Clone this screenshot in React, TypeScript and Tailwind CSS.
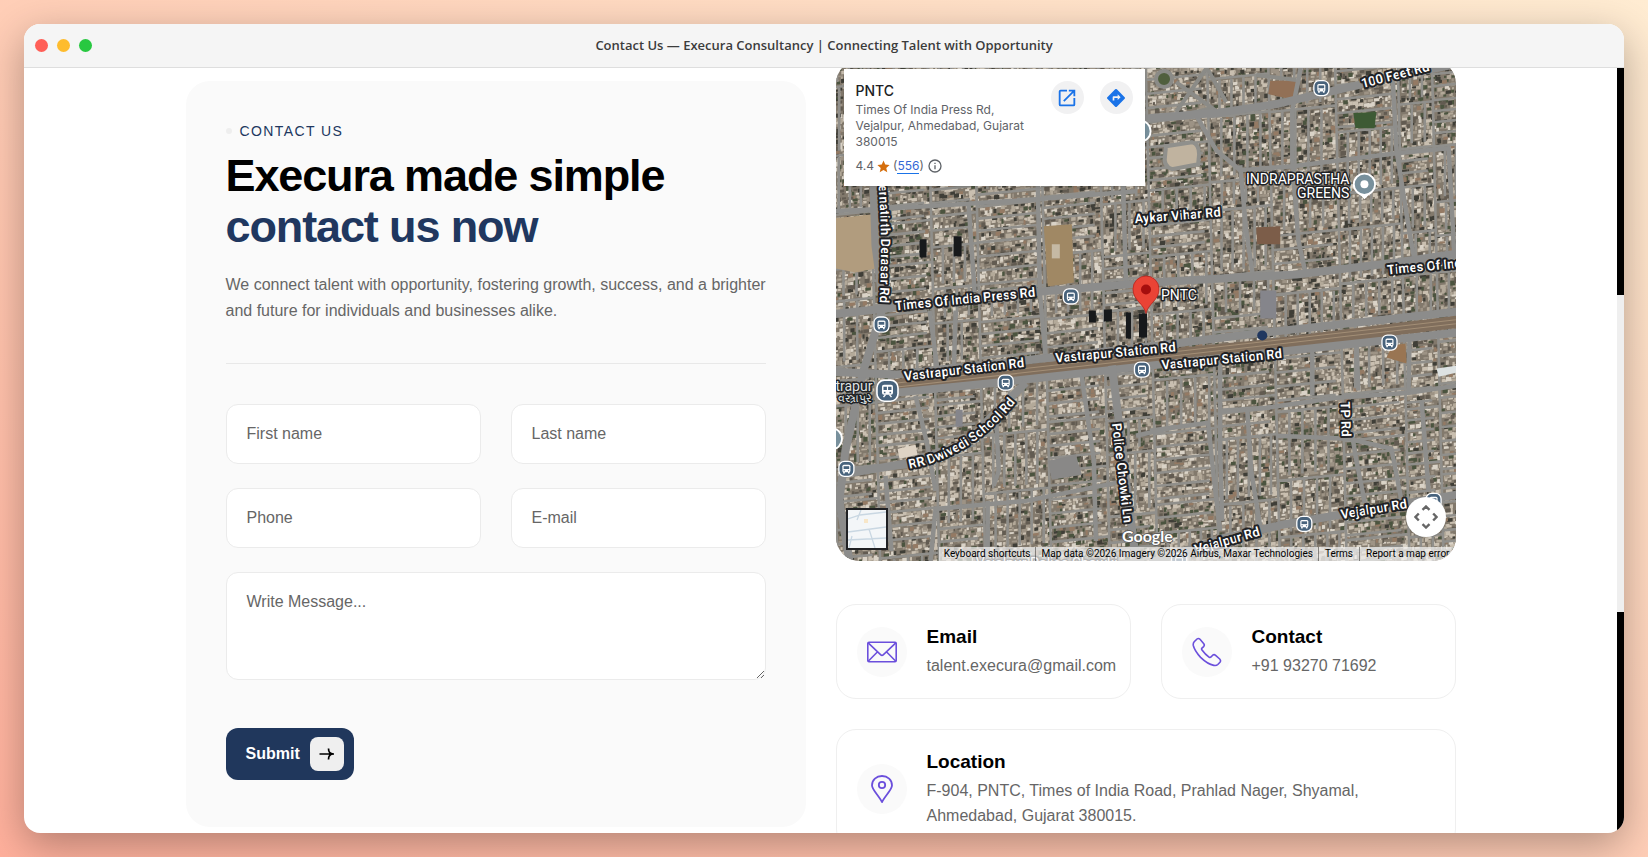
import React from "react";

type Point = [number, number];

const buildingColors = ["#c9bfb0", "#b3a999", "#dad3c7", "#9d9385", "#3f3e37", "#4b543f", "#947a64", "#625b51"];

function createRandom(seed: number) {
  let value = seed;
  return () => {
    value = (value * 1664525 + 1013904223) % 4294967296;
    return value / 4294967296;
  };
}

function createBlocks() {
  const random = createRandom(42);
  const blocks = buildingColors.map(() => "");
  let lanes = "";
  const point = (x: number, y: number) => `${x.toFixed(1)} ${(y - (x - 310) * 0.1).toFixed(1)}`;

  for (let left = -10; left < 630; ) {
    const width = 34 + random() * 34;
    lanes += `M${point(left, -40)}L${point(left + 14, 560)}`;
    for (let top = -60 + random() * 30; top < 550; ) {
      const height = 28 + random() * 44;
      const shade = random();
      const green = shade < 0.25 ? 0.2 : 0.05;
      const dark = top > 260 ? 0.07 : 0.14;
      const pitch = 11 + Math.floor(random() * 4);
      const vertical = random() < 0.45;
      const shift = ((top + 40) / 600) * 14;
      lanes += `M${point(left + shift, top)}L${point(left + shift + width, top)}`;
      if (vertical) {
        for (let x = pitch; x < width - 4; x += pitch) {
          lanes += `M${point(left + shift + x, top)}L${point(left + shift + x, top + height - 5)}`;
        }
      } else {
        for (let y = pitch; y < height - 4; y += pitch) {
          lanes += `M${point(left + shift, top + y)}L${point(left + shift + width - 6, top + y)}`;
        }
      }
      for (let y = top + 1; y < top + height - 1; y += 3.6) {
        for (let x = left + 2 + random() * 3; x < left + width; x += 2.6 + random() * 4) {
          const pick = random();
          let color = 0;
          if (pick < green) color = 5;
          else if (pick < green + dark) color = 4;
          else if (pick < green + dark + 0.1) color = 7;
          else if (pick < green + dark + 0.15) color = 6;
          else if (pick < green + dark + 0.27) color = 3;
          else if (pick < green + dark + 0.42) color = 1;
          else if (pick < green + dark + 0.54) color = 2;
          const w = 1.6 + random() * 4;
          const h = 1.6 + random() * 3.2;
          const slant = w * 0.1;
          blocks[color] += `M${point(x + shift, y + random() * 2.4)}l${w.toFixed(1)} -${slant.toFixed(1)}v${h.toFixed(1)}l-${w.toFixed(1)} ${slant.toFixed(1)}z`;
        }
      }
      top += height;
    }
    left += width;
  }
  return { blocks, lanes };
}

const { blocks, lanes } = createBlocks();

const streets = [
  "M-5 151L40 149L140 143L200 139L300 131",
  "M202 120L204 230L210 300",
  "M133 145L139 232",
  "M287 120L290 222",
  "M466 0L456 50L456 100L462 180L470 216",
  "M556 15L560 90L571 160L578 200",
  "M404 105L410 170L417 218",
  "M360 55L380 90L404 110L456 106L560 93L612 88L618 200",
  "M384 300L384 390L386 460",
  "M384 350L430 347L500 337L572 332L620 325",
  "M411 348L415 410L424 466",
  "M573 277L572 332",
  "M585 340L592 430",
  "M515 370L520 400L530 450",
  "M440 375L512 378L555 388L565 440",
  "M314 370L372 362L378 420L384 470",
  "M476 282L476 335",
  "M520 280L522 330",
  "M80 335L92 385L100 430",
  "M120 250L118 318",
  "M94 250L103 318",
  "M50 415L56 490",
  "M95 500L100 448L190 440L290 420",
  "M152 500L152 440",
  "M160 350L163 410L158 425",
  "M245 310L258 400L260 480",
  "M300 375L340 366",
];

const avenues = [
  "M240 67L314 58L380 53L440 44L500 30L560 16L630 2",
  "M38 120L40 185L48 245L28 310L10 390L4 440L14 500",
  "M-5 254L50 248L205 231L314 222L460 214L560 202L630 192",
  "M-5 311L60 314L314 286L420 273L630 250",
  "M40 334L170 321L314 305L630 271",
  "M10 413L75 402L130 382L160 352L190 322",
  "M276 305L284 370L300 500",
  "M314 502L384 478L450 463L630 432",
];

interface MapLabel {
  id: string;
  text: string;
  path: string;
}

const roadLabels: MapLabel[] = [
  { id: "hundred-feet", text: "100 Feet Rd", path: "M526 28L600 9" },
  { id: "derasar", text: "ernatirth Derasar Rd", path: "M43 125Q48 185 43 262" },
  { id: "press", text: "Times Of India Press Rd", path: "M60 250L220 234" },
  { id: "press-east", text: "Times Of India Press Rd", path: "M551 214L720 198" },
  { id: "aykar", text: "Aykar Vihar Rd", path: "M299 163L400 155" },
  { id: "station-west", text: "Vastrapur Station Rd", path: "M69 320L210 304" },
  { id: "station-mid", text: "Vastrapur Station Rd", path: "M220 302L360 289" },
  { id: "station-east", text: "Vastrapur Station Rd", path: "M326 309L470 295" },
  { id: "dwivedi", text: "RR Dwivedi School Rd", path: "M74 408Q145 394 192 325" },
  { id: "police", text: "Police Chowki Ln", path: "M276 363L290 480" },
  { id: "tp", text: "TP Rd", path: "M504 341L506 390" },
  { id: "vejalpur", text: "Vejalpur Rd", path: "M505 458L590 444" },
  { id: "vejalpur-west", text: "Vejalpur Rd", path: "M360 493L440 470" },
];

const busStops: Point[] = [
  [235, 236],
  [485, 28],
  [46, 264],
  [170, 322],
  [11, 408],
  [306, 309],
  [553, 282],
  [468, 463],
  [597, 440],
  [343, 500],
];

function BusStop({ at }: { at: Point }) {
  return (
    <g transform={`translate(${at[0]} ${at[1]})`}>
      <rect x="-7.500" y="-7.500" width="15" height="15" rx="5.500" fill="#48637c" stroke="#fff" strokeWidth="1.3" />
      <rect x="-4" y="-4" width="8" height="7.4" rx="1.5" fill="#fff" />
      <rect x="-2.8" y="-2.6" width="5.6" height="2.8" fill="#48637c" />
      <path d="M-3.2 3h1.6v1.6h-1.6zM1.6 3h1.6v1.6H1.6z" fill="#fff" />
      <path d="M-2.8 1.4h1.2v1h-1.2zM1.6 1.4h1.2v1H1.6z" fill="#48637c" />
    </g>
  );
}

function PlacePin({ at }: { at: Point }) {
  return (
    <g transform={`translate(${at[0]} ${at[1]})`}>
      <path d="M-6 9L0 15L6 9Z" fill="#fff" />
      <circle r="10.6" fill="#78909c" stroke="#fff" strokeWidth="1.8" />
      <circle r="4" fill="#fff" />
    </g>
  );
}

function SatelliteMap() {
  return (
    <svg
      viewBox="0 0 620 500"
      preserveAspectRatio="xMidYMid slice"
      className="block size-full"
      role="img"
      aria-label="Satellite map around PNTC"
      fontFamily="Roboto, sans-serif"
    >
      <rect width="620" height="500" fill="#82796c" />
      {blocks.map((path, index) => (
        <path key={buildingColors[index]} d={path} fill={buildingColors[index]} />
      ))}
      <path d={lanes} stroke="#908f8b" strokeWidth="2.6" fill="none" />
      <path d="M0 158L37 154L40 208L20 212L0 208Z" fill="#b19c7e" />
      <path d="M208 166L236 164L238 222L212 226Z" fill="#a08864" />
      <path d="M216 184h8v14h-8z" fill="#c5b9a4" />
      <path d="M420 167L444 166L444 184L421 184Z" fill="#7c5d49" />
      <path d="M434 21L460 20L458 40L432 34Z" fill="#927056" />
      <path d="M556 285L569 283L570 303L550 297Z" fill="#997553" />
      <path d="M517 53L540 52L538 68L519 68Z" fill="#3d5a34" />
      <path d="M290 252h5v26h-5zM303 253h8v24h-8zM253 250h7v12h-7zM268 249h8v12h-8zM84 179h7v18h-7zM118 176h8v20h-8z" fill="#17191b" />
      <path d="M120 349h7v17h-7zM424 230h16v28h-16z" fill="#85858b" />
      <path d="M62 388L80 384L82 394L64 398Z" fill="#ded3c4" />
      <path d="M600 308L620 305V312L602 316Z" fill="#dde2e2" />
      <path d="M212 400L240 394L246 414L216 419Z" fill="#898887" />
      <path d="M330 86L356 82Q363 84 363 94L362 104L336 109Q327 106 329 96Z" fill="#c0b39f" stroke="#90908c" strokeWidth="4" />
      <circle cx="328" cy="19" r="8" fill="#505f3d" stroke="#8b8b87" strokeWidth="4" />
      <path d="M340 22L376 48L314 62M376 0L340 52M372 10L390 42M420 15L460 20" stroke="#8b8b87" strokeWidth="4" fill="none" />
      {streets.map((path) => (
        <path key={path} d={path} stroke="#8e8e8c" strokeWidth="4.5" strokeLinejoin="round" fill="none" />
      ))}
      <path d="M55 325L314 296L420 286L630 260" stroke="#806e5c" strokeWidth="12" fill="none" />
      <path d="M55 323L314 294L630 258M55 327L314 298L630 262" stroke="#a28e76" strokeWidth="1" fill="none" />
      {avenues.map((path) => (
        <path key={path} d={path} stroke="#8c8c8b" strokeWidth="8" strokeLinejoin="round" fill="none" />
      ))}

      {busStops.map((at) => (
        <BusStop key={at.join("-")} at={at} />
      ))}
      <g transform="translate(52 330)">
        <rect x="-10.500" y="-10.500" width="21" height="21" rx="7.500" fill="#48637c" stroke="#fff" strokeWidth="1.6" />
        <rect x="-5.5" y="-6" width="11" height="10" rx="2" fill="#fff" />
        <path d="M-4-4h3.4v3.4H-4zM.6-4H4v3.4H.6zM-3.6 1h1.6v1.6h-1.6zM2 1h1.6v1.6H2z" fill="#48637c" />
        <path d="M-4 6.500L-2 4M4 6.500L2 4" stroke="#fff" strokeWidth="1.4" />
      </g>
      <PlacePin at={[528, 124]} />
      <PlacePin at={[304, 71]} />
      <PlacePin at={[-4, 378]} />

      <g fill="#fff" stroke="#202124" strokeWidth="4" strokeLinejoin="round" paintOrder="stroke" fontSize="13" fontWeight="600">
        {roadLabels.map((label) => (
          <React.Fragment key={label.id}>
            <path id={label.id} d={label.path} fill="none" stroke="none" />
            <text>
              <textPath href={`#${label.id}`}>{label.text}</textPath>
            </text>
          </React.Fragment>
        ))}
        <g fontWeight="400" fontSize="14" strokeWidth="3">
          <text x="513" y="124" textAnchor="end">INDRAPRASTHA</text>
          <text x="513" y="138" textAnchor="end">GREENS</text>
          <text x="325" y="240">PNTC</text>
          <text x="37" y="330" textAnchor="end" fill="#dfe1e2">Vastrapur</text>
          <text x="37" y="341" textAnchor="end" fill="#dfe1e2" fontSize="11">વસ્ત્રાપુર</text>
          <text x="140" y="507">Vejalpur Police Chowki</text>
        </g>
      </g>

      <path
        d="M310 253C308 243 297 240 297 228.500A13 13 0 0 1 323 228.500C323 240 312 243 310 253Z"
        fill="#ea4335"
        stroke="#b3261e"
        strokeWidth="0.8"
      />
      <circle cx="310" cy="229" r="5" fill="#a50e0e" />
      <circle cx="426" cy="275" r="5" fill="#20375f" />
      <text x="286" y="481" fontFamily="Lato, sans-serif" fontSize="16" fontWeight="700" fill="#fff" stroke="#555" strokeWidth="1.500" paintOrder="stroke">
        Google
      </text>
    </svg>
  );
}

function PlaceCard() {
  return (
    <div className="absolute top-[9px] left-2 flex h-[117px] w-[301px] justify-between bg-white p-3 font-[Inter,sans-serif] text-xs text-[#5f6368] shadow-sm">
      <div className="w-[176px]">
        <h2 className="pt-[2px] text-sm leading-4 font-medium text-[#202124]">PNTC</h2>
        <p className="pt-[3px] leading-4">Times Of India Press Rd, Vejalpur, Ahmedabad, Gujarat 380015</p>
        <div className="flex items-center gap-[3px] pt-2 leading-4">
          <span>4.4</span>
          <svg viewBox="0 0 24 24" className="size-[13px]" aria-hidden="true">
            <path d="M12 1l3.200 7.500 8.100.7-6.200 5.400 1.900 8L12 18.300l-7 4.300 1.900-8L.7 9.200l8.100-.7z" fill="#d56e0c" />
          </svg>
          <span>
            (<a href="#reviews" className="border-b border-[#1a73e8] text-[#3367d6]">556</a>)
          </span>
          <svg viewBox="0 0 24 24" className="size-4" aria-hidden="true">
            <circle cx="12" cy="12" r="9" fill="none" stroke="#5f6368" strokeWidth="2" />
            <path d="M11 7h2v2h-2zM11 11h2v6h-2z" fill="#5f6368" />
          </svg>
        </div>
      </div>
      <div className="flex gap-4">
        <a href="#open" aria-label="Open in Maps" className="flex size-[33px] items-center justify-center rounded-full bg-[#f1f1f2]">
          <svg viewBox="0 0 24 24" className="size-[22px]" aria-hidden="true">
            <path
              d="M19 19H5V5h7V3H5a2 2 0 0 0-2 2v14a2 2 0 0 0 2 2h14a2 2 0 0 0 2-2v-7h-2v7zM14 3v2h3.600l-9.800 9.800 1.400 1.400L19 6.400V10h2V3h-7z"
              fill="#1a73e8"
            />
          </svg>
        </a>
        <a href="#directions" aria-label="Directions" className="flex size-[33px] items-center justify-center rounded-full bg-[#f1f1f2]">
          <svg viewBox="0 0 24 24" className="size-5" aria-hidden="true">
            <path
              d="M22.400 11L13 1.600a1.400 1.400 0 0 0-2 0L1.600 11a1.400 1.400 0 0 0 0 2l9.400 9.400a1.400 1.400 0 0 0 2 0l9.400-9.400a1.400 1.400 0 0 0 0-2zM14 14.500V12h-4v3H8v-4a1 1 0 0 1 1-1h5V7.500l3.500 3.500-3.500 3.500z"
              fill="#1a73e8"
            />
          </svg>
        </a>
      </div>
    </div>
  );
}

function MapPanel() {
  return (
    <section className="relative h-[501px] overflow-hidden rounded-3xl">
      <SatelliteMap />
      <PlaceCard />
      <button type="button" aria-label="Show street map" className="absolute bottom-[11px] left-[10px] size-[42px] border-2 border-[#202124] bg-[#f3f6f8]">
        <svg viewBox="0 0 38 38" className="size-full" aria-hidden="true">
          <path d="M0 9L12 5L38 2M0 22L38 17M1 38L4 26M13 0L9 10M21 19L27 38M0 30L38 28" stroke="#c9d7e2" strokeWidth="1.3" fill="none" />
          <path d="M16 9h4v4h-4z" fill="#f7e6c8" />
        </svg>
      </button>
      <button type="button" aria-label="Map camera controls" className="absolute right-[10px] bottom-6 flex size-10 items-center justify-center rounded-full bg-white shadow">
        <svg viewBox="0 0 24 24" className="size-6" fill="none" stroke="#666" strokeWidth="2.400" aria-hidden="true">
          <path d="M8.500 4.800L12 1.500L15.500 4.800M8.500 19.200L12 22.500L15.500 19.200M4.800 8.500L1.500 12L4.800 15.500M19.200 8.500L22.500 12L19.200 15.500" />
        </svg>
      </button>
      <div className="absolute right-0 bottom-0 flex h-[14px] items-center bg-[#f5f5f5]/70 font-[Roboto,sans-serif] text-[10px] leading-[14px] whitespace-nowrap text-black">
        <button type="button" className="px-[5px]">Keyboard shortcuts</button>
        <span className="border-l border-black/40 px-[5px]">Map data ©2026 Imagery ©2026 Airbus, Maxar Technologies</span>
        <a href="#terms" className="border-l border-black/40 px-[6px]">Terms</a>
        <a href="#report" className="border-l border-black/40 px-[6px]">Report a map error</a>
      </div>
    </section>
  );
}

function MailIcon() {
  return (
    <svg viewBox="0 0 30 30" className="size-[30px]" fill="none" stroke="#6b4fdc" strokeWidth="1.600" strokeLinejoin="round" aria-hidden="true">
      <rect x="0.800" y="5.200" width="28.400" height="19.600" rx="1.200" />
      <path d="M1.200 5.800L13.800 17.800Q15 18.900 16.200 17.800L28.800 5.800M1.200 24.300L10.600 14.800M28.800 24.300L19.400 14.800" />
    </svg>
  );
}

function PhoneIcon() {
  return (
    <svg viewBox="0 0 30 30" className="size-[30px]" fill="none" stroke="#6b4fdc" strokeWidth="1.600" strokeLinejoin="round" aria-hidden="true">
      <path d="M2.200 4.800L5 2Q6.500.800 8 2.300L11.800 6.700Q12.900 8.200 11.600 9.600L9.700 11.400Q9.300 12 10 13Q13 17.200 17.300 20.300Q18.200 20.800 18.800 20.100L20.700 18.200Q22.100 17.100 23.600 18.300L27.700 22Q29.200 23.600 28 25.200L25.800 27.500Q24.400 28.900 21.800 28.400Q15.600 27.200 8.600 20.400Q2.500 13.500 1.300 8.500Q.900 6.300 2.200 4.800Z" />
    </svg>
  );
}

function LocationIcon() {
  return (
    <svg viewBox="0 0 30 30" className="size-[30px]" fill="none" stroke="#6b4fdc" strokeWidth="1.800" strokeLinejoin="round" aria-hidden="true">
      <path d="M15 28C12 22 5 15.500 5 11.500C5 5.800 9.400 2 15 2C20.600 2 25 5.800 25 11.500C25 15.500 18 22 15 28Z" />
      <circle cx="15" cy="11" r="3.200" />
    </svg>
  );
}

interface InfoCardProps {
  icon: React.ReactNode;
  title: string;
  className?: string;
  children: React.ReactNode;
}

function InfoCard({ icon, title, className = "", children }: InfoCardProps) {
  return (
    <article className={`flex items-center gap-5 rounded-[20px] border border-[#efefef] bg-white py-5 pl-5 ${className}`}>
      <div className="flex size-[50px] shrink-0 items-center justify-center rounded-full bg-[#fafafa]">{icon}</div>
      <div>
        <h3 className="mb-1 text-[19px] leading-6 font-bold text-black">{title}</h3>
        <div className="leading-[25px] text-[#666]">{children}</div>
      </div>
    </article>
  );
}

const fieldClass =
  "block w-full rounded-xl border border-[#ebebeb] bg-white px-5 text-base text-[#222] outline-none placeholder:text-[#666]";

const fields = [
  { id: "first", label: "First name", type: "text" },
  { id: "last", label: "Last name", type: "text" },
  { id: "phone", label: "Phone", type: "tel" },
  { id: "email", label: "E-mail", type: "email" },
];

function ContactForm() {
  return (
    <section className="rounded-3xl bg-[#fafafa] px-10 pt-10 pb-[47px]">
      <p className="flex items-center gap-2 text-sm leading-5 font-medium tracking-widest text-[#20375f] uppercase">
        <span className="size-[6px] rounded-full bg-[#eee]" />
        Contact us
      </p>
      <h1 className="mt-[9px] text-[45px] leading-[51px] font-bold tracking-tight text-black">
        Execura made simple
        <span className="block text-[#20375f]">contact us now</span>
      </h1>
      <p className="mt-5 -mr-6 leading-[26px] text-[#666]">
        We connect talent with opportunity, fostering growth, success, and a brighter
        <br />
        and future for individuals and businesses alike.
      </p>
      <form className="mt-[39px] border-t border-[#e8e8e8] pt-10" onSubmit={(event) => event.preventDefault()}>
        <div className="grid grid-cols-2 gap-x-[30px] gap-y-6">
          {fields.map((field) => (
            <input
              key={field.id}
              id={field.id}
              type={field.type}
              aria-label={field.label}
              placeholder={field.label}
              className={`${fieldClass} h-[60px]`}
            />
          ))}
          <textarea
            id="message"
            aria-label="Message"
            placeholder="Write Message..."
            className={`${fieldClass} col-span-2 h-[108px] resize py-4 leading-[26px]`}
          />
        </div>
        <button type="submit" className="mt-12 flex h-[52px] items-center gap-[10px] rounded-xl bg-[#20375c] pr-[10px] pl-5 text-base font-bold text-white">
          Submit
          <span className="flex size-[34px] items-center justify-center rounded-lg bg-[#efefef]">
            <svg viewBox="0 0 16 16" className="size-4" fill="none" stroke="#000" strokeWidth="1.700" aria-hidden="true">
              <path d="M.5 8H15M9.500 2.500C9.500 5.500 11 8 14.500 8C11 8 9.500 10.500 9.500 13.500" />
            </svg>
          </span>
        </button>
      </form>
    </section>
  );
}

export default function App() {
  return (
    <div className="flex h-screen bg-linear-to-tr from-[#ffb09c] to-[#ffecd2] p-6 font-['Liberation_Sans',Arial,sans-serif] text-base">
      <div className="flex min-w-0 flex-1 flex-col overflow-hidden rounded-2xl bg-white shadow-[0_12px_40px_rgba(0,0,0,0.3)]">
        <header className="grid h-11 shrink-0 grid-cols-[1fr_auto_1fr] items-center border-b border-[#dedede] bg-[#f5f5f5] px-[11px]">
          <div className="flex gap-[9px]">
            <span className="size-[13px] rounded-full bg-[#ff5f57]" />
            <span className="size-[13px] rounded-full bg-[#febc2e]" />
            <span className="size-[13px] rounded-full bg-[#28c840]" />
          </div>
          <div className="font-['Open_Sans',sans-serif] text-[13px] font-semibold text-[#3c3c3c]">
            Contact Us — Execura Consultancy | Connecting Talent with Opportunity
          </div>
        </header>
        <div className="flex min-h-0 flex-1">
          <main className="min-w-0 flex-1 overflow-hidden">
            <div className="mx-auto grid max-w-[1270px] grid-cols-2 items-start gap-[30px] pt-[13px]">
              <ContactForm />
              <div className="-mt-[21px]">
                <MapPanel />
                <div className="mt-[43px] grid grid-cols-2 gap-[30px]">
                  <InfoCard icon={<MailIcon />} title="Email">
                    <a href="mailto:talent.execura@gmail.com">talent.execura@gmail.com</a>
                  </InfoCard>
                  <InfoCard icon={<PhoneIcon />} title="Contact">
                    <a href="tel:+919327071692">+91 93270 71692</a>
                  </InfoCard>
                  <InfoCard icon={<LocationIcon />} title="Location" className="col-span-2 pr-16">
                    F-904, PNTC, Times of India Road, Prahlad Nager, Shyamal, Ahmedabad, Gujarat 380015.
                  </InfoCard>
                </div>
              </div>
            </div>
          </main>
          <div className="flex w-[7px] flex-col bg-black" aria-hidden="true">
            <div className="flex-[227]" />
            <div className="flex-[317] bg-[#efefef]" />
            <div className="flex-[221]" />
          </div>
        </div>
      </div>
    </div>
  );
}
